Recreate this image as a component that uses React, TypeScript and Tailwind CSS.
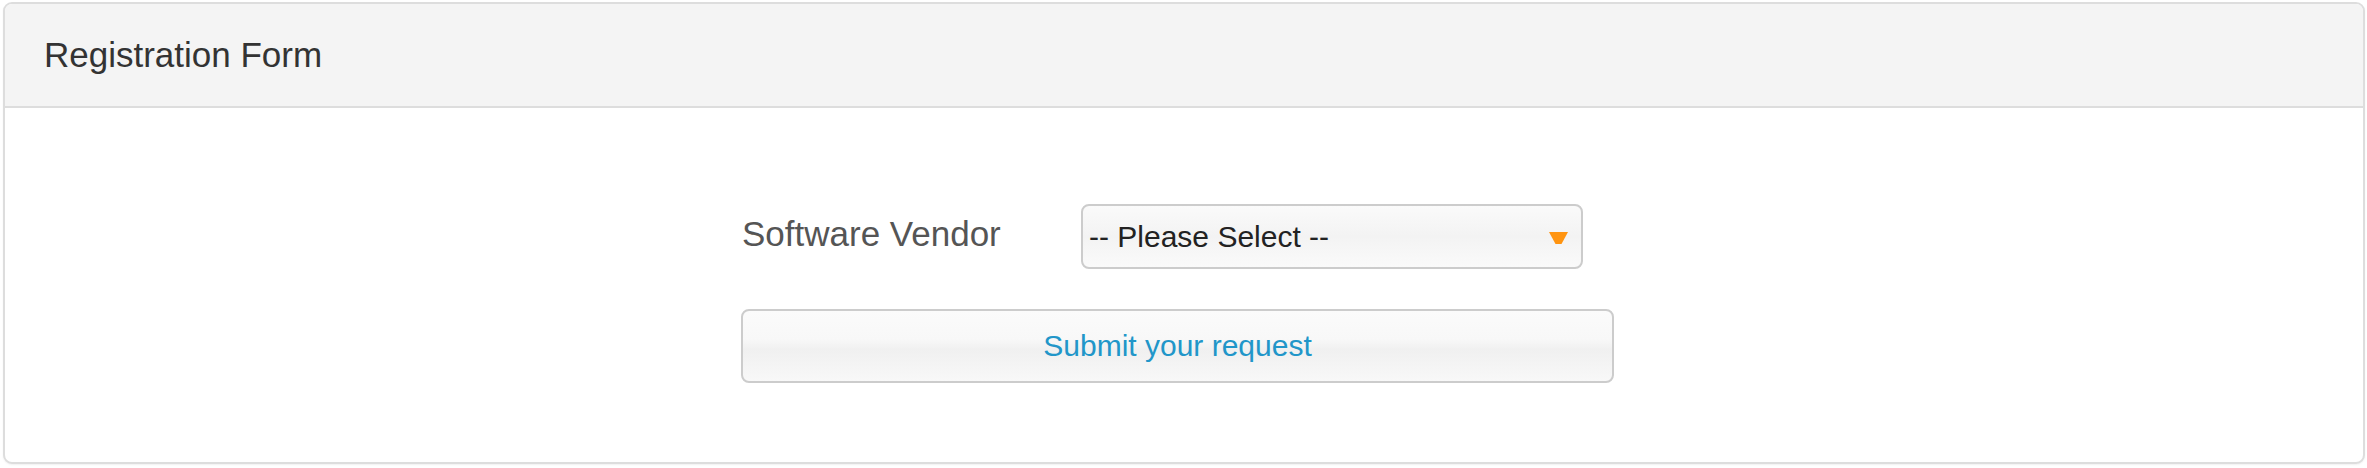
import React from "react";

export default function App() {
  return (
    <div
      className="w-[2367px] h-[468px] bg-white pt-[2px] pl-[3px]"
      style={{ fontFamily: '"Liberation Sans", Arial, sans-serif' }}
    >
      <div className="w-[2362px] h-[462px] border-2 border-[#dddddd] rounded-[9px] overflow-hidden bg-white shadow-[0_1px_2px_rgba(0,0,0,0.06)] flex flex-col">
        <div className="h-[104px] shrink-0 bg-[#f4f4f4] border-b-2 border-[#dddddd] flex items-center pl-[39px]">
          <h3 className="text-[35px] leading-none text-[#333333] pb-[1px]">Registration Form</h3>
        </div>
        <div className="flex-1 flex justify-center pt-[96px] pr-[13px]">
          <div className="w-[873px] flex flex-col gap-[40px]">
            <div className="flex items-center">
              <label className="w-[340px] pl-[1px] text-[35px] leading-none text-[#555555] pb-[6px]">
                Software Vendor
              </label>
              <div className="w-[502px] h-[65px] border-2 border-[#cccccc] rounded-[8px] bg-[linear-gradient(to_bottom,#fafafa_0%,#f3f3f3_50%,#fafafa_100%)] flex items-center justify-between pl-[6px] pr-[13px]">
                <span className="text-[30px] leading-none text-[#222222]">-- Please Select --</span>
                <svg width="19" height="12" viewBox="0 0 19 12" className="mt-[2px]">
                  <polygon points="0,0 19,0 12.5,12 6.5,12" fill="#ff9410" />
                </svg>
              </div>
            </div>
            <button className="w-[873px] h-[74px] border-2 border-[#cccccc] rounded-[8px] bg-[linear-gradient(to_bottom,#fbfbfb_0%,#f8f8f8_40%,#f0f0f0_55%,#f8f8f8_100%)] flex items-center justify-center">
              <span className="text-[30px] leading-none text-[#2196c9]">Submit your request</span>
            </button>
          </div>
        </div>
      </div>
    </div>
  );
}
